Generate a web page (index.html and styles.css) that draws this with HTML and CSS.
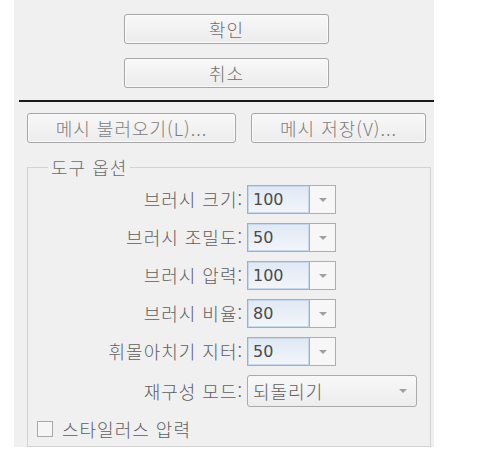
FILE: index.html
```html
<!DOCTYPE html>
<html lang="ko">

<head>
    <meta charset="UTF-8">
    <meta name="viewport" content="width=device-width, initial-scale=1.0">
    <title>Liquify</title>
    <link rel="stylesheet" href="styles.css">
</head>

<body>
    <div class="panel">
        <div class="actions">
            <button class="btn btn-wide">확인</button>
            <button class="btn btn-wide">취소</button>
        </div>

        <hr class="divider">

        <div class="mesh-row">
            <button class="btn btn-load">메시 불러오기(L)...</button>
            <button class="btn btn-save">메시 저장(V)...</button>
        </div>

        <fieldset class="tool-options">
            <legend>도구 옵션</legend>
            <div class="options">
                <div class="option-row">
                    <label>브러시 크기:</label>
                    <div class="combo"><span class="combo-value">100</span><span class="combo-arrow"></span></div>
                </div>
                <div class="option-row">
                    <label>브러시 조밀도:</label>
                    <div class="combo"><span class="combo-value">50</span><span class="combo-arrow"></span></div>
                </div>
                <div class="option-row">
                    <label>브러시 압력:</label>
                    <div class="combo"><span class="combo-value">100</span><span class="combo-arrow"></span></div>
                </div>
                <div class="option-row">
                    <label>브러시 비율:</label>
                    <div class="combo"><span class="combo-value">80</span><span class="combo-arrow"></span></div>
                </div>
                <div class="option-row">
                    <label>휘몰아치기 지터:</label>
                    <div class="combo"><span class="combo-value">50</span><span class="combo-arrow"></span></div>
                </div>
                <div class="option-row option-select">
                    <label>재구성 모드:</label>
                    <div class="select"><span>되돌리기</span><span class="select-arrow"></span></div>
                </div>
            </div>
            <label class="check"><span class="check-box"></span>스타일러스 압력</label>
        </fieldset>
    </div>
</body>

</html>
```

FILE: styles.css
```css
* {
    margin: 0;
    box-sizing: border-box;
}

body {
    background-color: white;
    font-family: "Noto Sans CJK KR", "Noto Sans", sans-serif;
    font-size: 18px;
    font-weight: 300;
    color: #5e5e5e;
}

.panel {
    margin-left: 14px;
    width: 420px;
    height: 447px;
    background-color: #f0f0f0;
    padding-top: 14px;
    overflow: hidden;
}

.btn {
    font-family: inherit;
    font-size: 18px;
    font-weight: 300;
    letter-spacing: 1px;
    color: #6e6e6e;
    height: 30px;
    padding: 0;
    border: 1px solid #a6a6a6;
    border-radius: 3px;
    background: linear-gradient(#f8f8f8, #ececec);
    box-shadow: inset 0 0 0 1px #fbfbfb;
    line-height: 26px;
}

.actions {
    display: flex;
    flex-direction: column;
    gap: 14px;
    padding-left: 110px;
}

.btn-wide {
    width: 205px;
}

.divider {
    border: 0;
    height: 2px;
    background-color: #1a1a1a;
    margin: 12px 0 0 5px;
}

.mesh-row {
    display: flex;
    gap: 15px;
    margin-top: 11px;
    padding-left: 13px;
}

.btn-load {
    width: 209px;
    color: #7c7c7c;
}

.btn-save {
    width: 175px;
    color: #7c7c7c;
}

.tool-options {
    margin: 13px 0 0 13px;
    width: 404px;
    height: 291px;
    padding: 7px 0 0 0;
    border: 1px solid #d3d3d3;
    min-width: 0;
}

.tool-options legend {
    margin-left: 20px;
    padding: 0 3px;
    line-height: 22px;
    letter-spacing: 1px;
    color: #6a6a6a;
}

.options {
    display: flex;
    flex-direction: column;
    gap: 9px;
}

.option-row {
    display: grid;
    grid-template-columns: 215px auto;
    column-gap: 4px;
    align-items: center;
    height: 29px;
}

.option-row label {
    text-align: right;
    letter-spacing: 1px;
    line-height: 29px;
}

.option-select {
    height: 32px;
}

.combo {
    display: flex;
    width: 89px;
    height: 29px;
    border: 1px solid #a4afbd;
}

.combo-value {
    width: 62px;
    border-right: 1px solid #a4afbd;
    background: linear-gradient(#dfe8f4, #f3f6fa);
    box-shadow: inset 0 0 0 1px #c8d8ec;
    font-family: "DejaVu Sans", sans-serif;
    font-size: 16px;
    font-weight: 400;
    color: #4a4a4a;
    padding-left: 5px;
    line-height: 27px;
}

.combo-arrow {
    flex: 1;
    display: flex;
    align-items: center;
    justify-content: center;
    background-color: #f7f7f7;
}

.combo-arrow::after,
.select-arrow::after {
    content: "";
    border-left: 4px solid transparent;
    border-right: 4px solid transparent;
    border-top: 4px solid #a0a0a0;
}

.select {
    display: flex;
    align-items: center;
    justify-content: space-between;
    width: 170px;
    height: 32px;
    border: 1px solid #aaa;
    border-radius: 3px;
    background: linear-gradient(#f8f8f8, #ededed);
    padding: 0 9px 0 5px;
    letter-spacing: 1px;
}

.select-arrow {
    display: flex;
}

.check {
    display: flex;
    align-items: center;
    gap: 9px;
    margin-top: 13px;
    padding-left: 9px;
    letter-spacing: 1px;
    line-height: 18px;
}

.check-box {
    width: 16px;
    height: 16px;
    border: 1px solid #a8a8a8;
    background-color: #f5f5f5;
}
```
